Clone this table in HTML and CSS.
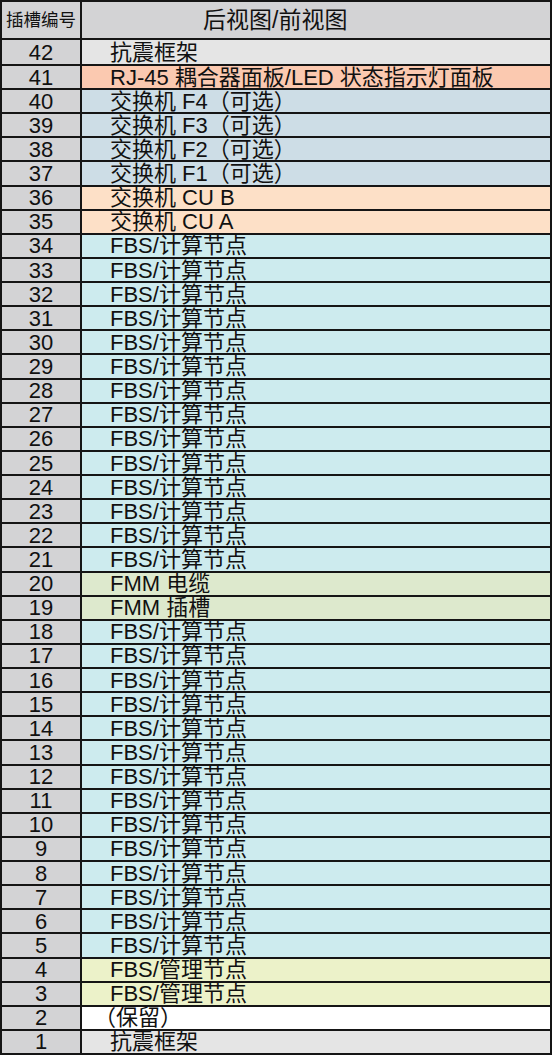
FILE: index.html
```html
<!DOCTYPE html>
<html lang="zh-CN">
<head>
    <meta charset="UTF-8">
    <meta name="viewport" content="width=device-width, initial-scale=1.0">
    <title>插槽编号</title>
    <link rel="stylesheet" href="styles.css">
</head>
<body>
    <div class="slot-table">
        <div class="row head"><div class="num">插槽编号</div><div class="desc">后视图/前视图</div></div>
        <div class="row frame"><div class="num">42</div><div class="desc">抗震框架</div></div>
        <div class="row led"><div class="num">41</div><div class="desc">RJ-45 耦合器面板/LED 状态指示灯面板</div></div>
        <div class="row switch"><div class="num">40</div><div class="desc">交换机 F4（可选）</div></div>
        <div class="row switch"><div class="num">39</div><div class="desc">交换机 F3（可选）</div></div>
        <div class="row switch"><div class="num">38</div><div class="desc">交换机 F2（可选）</div></div>
        <div class="row switch"><div class="num">37</div><div class="desc">交换机 F1（可选）</div></div>
        <div class="row cu"><div class="num">36</div><div class="desc">交换机 CU B</div></div>
        <div class="row cu"><div class="num">35</div><div class="desc">交换机 CU A</div></div>
        <div class="row compute"><div class="num">34</div><div class="desc">FBS/计算节点</div></div>
        <div class="row compute"><div class="num">33</div><div class="desc">FBS/计算节点</div></div>
        <div class="row compute"><div class="num">32</div><div class="desc">FBS/计算节点</div></div>
        <div class="row compute"><div class="num">31</div><div class="desc">FBS/计算节点</div></div>
        <div class="row compute"><div class="num">30</div><div class="desc">FBS/计算节点</div></div>
        <div class="row compute"><div class="num">29</div><div class="desc">FBS/计算节点</div></div>
        <div class="row compute"><div class="num">28</div><div class="desc">FBS/计算节点</div></div>
        <div class="row compute"><div class="num">27</div><div class="desc">FBS/计算节点</div></div>
        <div class="row compute"><div class="num">26</div><div class="desc">FBS/计算节点</div></div>
        <div class="row compute"><div class="num">25</div><div class="desc">FBS/计算节点</div></div>
        <div class="row compute"><div class="num">24</div><div class="desc">FBS/计算节点</div></div>
        <div class="row compute"><div class="num">23</div><div class="desc">FBS/计算节点</div></div>
        <div class="row compute"><div class="num">22</div><div class="desc">FBS/计算节点</div></div>
        <div class="row compute"><div class="num">21</div><div class="desc">FBS/计算节点</div></div>
        <div class="row fmm"><div class="num">20</div><div class="desc">FMM 电缆</div></div>
        <div class="row fmm"><div class="num">19</div><div class="desc">FMM 插槽</div></div>
        <div class="row compute"><div class="num">18</div><div class="desc">FBS/计算节点</div></div>
        <div class="row compute"><div class="num">17</div><div class="desc">FBS/计算节点</div></div>
        <div class="row compute"><div class="num">16</div><div class="desc">FBS/计算节点</div></div>
        <div class="row compute"><div class="num">15</div><div class="desc">FBS/计算节点</div></div>
        <div class="row compute"><div class="num">14</div><div class="desc">FBS/计算节点</div></div>
        <div class="row compute"><div class="num">13</div><div class="desc">FBS/计算节点</div></div>
        <div class="row compute"><div class="num">12</div><div class="desc">FBS/计算节点</div></div>
        <div class="row compute"><div class="num">11</div><div class="desc">FBS/计算节点</div></div>
        <div class="row compute"><div class="num">10</div><div class="desc">FBS/计算节点</div></div>
        <div class="row compute"><div class="num">9</div><div class="desc">FBS/计算节点</div></div>
        <div class="row compute"><div class="num">8</div><div class="desc">FBS/计算节点</div></div>
        <div class="row compute"><div class="num">7</div><div class="desc">FBS/计算节点</div></div>
        <div class="row compute"><div class="num">6</div><div class="desc">FBS/计算节点</div></div>
        <div class="row compute"><div class="num">5</div><div class="desc">FBS/计算节点</div></div>
        <div class="row mgmt"><div class="num">4</div><div class="desc">FBS/管理节点</div></div>
        <div class="row mgmt"><div class="num">3</div><div class="desc">FBS/管理节点</div></div>
        <div class="row reserved"><div class="num">2</div><div class="desc">（保留）</div></div>
        <div class="row frame"><div class="num">1</div><div class="desc">抗震框架</div></div>
    </div>
</body>
</html>
```

FILE: styles.css
```css
body {
    margin: 0;
    font-family: 'Liberation Sans', 'Noto Sans CJK SC', sans-serif;
    color: #111;
    background: #fff;
}
.slot-table {
    box-sizing: border-box;
    width: 552px;
    height: 1055px;
    display: grid;
    grid-template-rows: 36px 24px repeat(41, minmax(0, 1fr));
    gap: 2px;
    padding: 2px;
    background: #151515;
}
.row {
    display: grid;
    grid-template-columns: 78px 1fr;
    gap: 2px;
    min-height: 0;
    font-size: 22px;
    line-height: 20px;
}
.num, .desc {
    display: flex;
    align-items: center;
    min-height: 0;
    white-space: nowrap;
}
.num {
    justify-content: center;
    background: #d3d3d5;
    padding-top: 1px;
}
.desc {
    padding-left: 28px;
    padding-top: 1px;
}
.head .num {
    font-size: 17.5px;
    padding-top: 0;
}
.head .desc {
    background: #d3d3d5;
    padding-left: 121px;
    font-size: 23px;
    padding-top: 0;
}
.reserved .desc {
    padding-left: 12px;
}
.frame .desc { background: #e5e5e5; }
.led .desc { background: #fbc9b0; }
.switch .desc { background: #cddde6; }
.cu .desc { background: #fde0c7; }
.compute .desc { background: #cdebee; }
.fmm .desc { background: #dde9cd; }
.mgmt .desc { background: #ecf2c9; }
.reserved .desc { background: #fff; }
```
